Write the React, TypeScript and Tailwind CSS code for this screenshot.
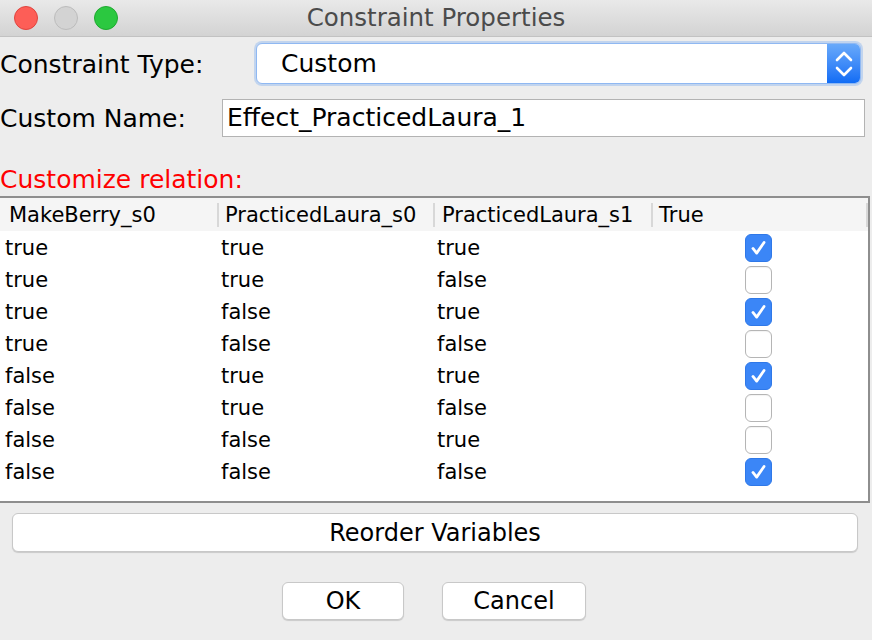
import React from "react";

const rows: [string, string, string, boolean][] = [
  ["true", "true", "true", true],
  ["true", "true", "false", false],
  ["true", "false", "true", true],
  ["true", "false", "false", false],
  ["false", "true", "true", true],
  ["false", "true", "false", false],
  ["false", "false", "true", false],
  ["false", "false", "false", true],
];

function Check({ on }: { on: boolean }) {
  if (on) {
    return (
      <div className="w-[27px] h-[28px] rounded-[6px] bg-[#3b86f7] border border-[#2f78e8] flex items-center justify-center">
        <svg width="27" height="28" viewBox="0 0 27 28">
          <path d="M7.5 14.5 L11.5 19.5 L19.5 8" fill="none" stroke="#ffffff" strokeWidth="3" strokeLinecap="round" strokeLinejoin="round" />
        </svg>
      </div>
    );
  }
  return <div className="w-[27px] h-[28px] rounded-[6px] bg-white border border-[#b5b5b5] shadow-[inset_0_1px_1px_rgba(0,0,0,0.05)]" />;
}

export default function App() {
  return (
    <div className="w-[872px] h-[640px] bg-[#ededed] font-['DejaVu_Sans',sans-serif] text-black overflow-hidden flex flex-col">
      {/* Title bar */}
      <div className="h-[37px] shrink-0 grid grid-cols-[1fr_auto_1fr] items-center bg-gradient-to-b from-[#e9e9e9] to-[#d3d3d3] border-b border-[#c2c2c2]">
        <div className="flex items-center gap-[16px] pl-[14px]">
          <div className="w-[24px] h-[24px] rounded-full bg-[#fd5e57] border border-[#e0443e]" />
          <div className="w-[24px] h-[24px] rounded-full bg-[#d3d3d3] border border-[#bcbcbc]" />
          <div className="w-[24px] h-[24px] rounded-full bg-[#2bc840] border border-[#1ea92f]" />
        </div>
        <div className="text-[24.5px] leading-[30px] text-[#4b4b4b]">Constraint Properties</div>
        <div />
      </div>

      {/* Constraint Type */}
      <div className="mt-[6px] h-[41px] flex items-center">
        <div className="w-[256px] text-[25px] leading-[30px] pt-[2px]">Constraint Type:</div>
        <div className="flex-1 mr-[11px] h-[41px] flex rounded-[6px] bg-white border border-[#8fb8f2] shadow-[0_0_0_2px_rgba(140,182,240,0.45)] overflow-hidden">
          <div className="flex-1 pl-[24px] flex items-center text-[25px] leading-[30px]">Custom</div>
          <div className="w-[33px] bg-gradient-to-b from-[#68a9fa] to-[#0f6cf5] flex items-center justify-center">
            <svg width="20" height="30" viewBox="0 0 20 30">
              <path d="M3 11 L10 4 L17 11" fill="none" stroke="#ffffff" strokeWidth="2.6" strokeLinecap="round" strokeLinejoin="round" />
              <path d="M3 19 L10 26 L17 19" fill="none" stroke="#ffffff" strokeWidth="2.6" strokeLinecap="round" strokeLinejoin="round" />
            </svg>
          </div>
        </div>
      </div>

      {/* Custom Name */}
      <div className="mt-[15px] h-[38px] flex items-center">
        <div className="w-[222px] text-[25px] leading-[30px] pt-[2px]">Custom Name:</div>
        <div className="flex-1 mr-[7px] h-[38px] bg-white border border-[#b3b3b3] flex items-center pl-[4px] text-[25px] leading-[30px]">
          Effect_PracticedLaura_1
        </div>
      </div>

      {/* Customize relation */}
      <div className="mt-[28px] h-[30px] text-[25px] leading-[30px] text-[#ff0000]">Customize relation:</div>

      {/* Table */}
      <div className="mt-[1px] w-[870px] h-[307px] bg-white border-t-2 border-r-2 border-b-2 border-[#8e8e8e] flex flex-col">
        <div className="h-[33px] bg-[#f5f5f5] grid grid-cols-[217px_216px_218px_1fr] items-center text-[21px] leading-[30px]">
          <div className="pl-[9px]">MakeBerry_s0</div>
          <div className="pl-[6px] border-l-2 border-[#d8d8d8] h-[24px] flex items-center">PracticedLaura_s0</div>
          <div className="pl-[7px] border-l-2 border-[#d8d8d8] h-[24px] flex items-center">PracticedLaura_s1</div>
          <div className="pl-[6px] border-l-2 border-r-2 border-[#d8d8d8] h-[24px] flex items-center">True</div>
        </div>
        {rows.map((r, i) => (
          <div key={i} className="h-[32px] grid grid-cols-[217px_216px_218px_1fr] items-center text-[21px] leading-[32px]">
            <div className="pl-[5px] pt-[1px]">{r[0]}</div>
            <div className="pl-[4px] pt-[1px]">{r[1]}</div>
            <div className="pl-[4px] pt-[1px]">{r[2]}</div>
            <div className="flex justify-center pr-[2px]">
              <Check on={r[3]} />
            </div>
          </div>
        ))}
      </div>

      {/* Reorder */}
      <div className="mt-[10px] ml-[12px] w-[846px] h-[39px] rounded-[6px] bg-white border border-[#c8c8c8] shadow-[0_1px_1px_rgba(0,0,0,0.15)] flex items-center justify-center text-[24px] leading-[30px]">
        Reorder Variables
      </div>

      {/* OK / Cancel */}
      <div className="mt-[30px] flex justify-center gap-[38px] pr-[4px]">
        <div className="w-[122px] h-[38px] rounded-[6px] bg-white border border-[#c8c8c8] shadow-[0_1px_1px_rgba(0,0,0,0.15)] flex items-center justify-center text-[24px] leading-[30px]">
          OK
        </div>
        <div className="w-[144px] h-[38px] rounded-[6px] bg-white border border-[#c8c8c8] shadow-[0_1px_1px_rgba(0,0,0,0.15)] flex items-center justify-center text-[24px] leading-[30px]">
          Cancel
        </div>
      </div>
    </div>
  );
}
